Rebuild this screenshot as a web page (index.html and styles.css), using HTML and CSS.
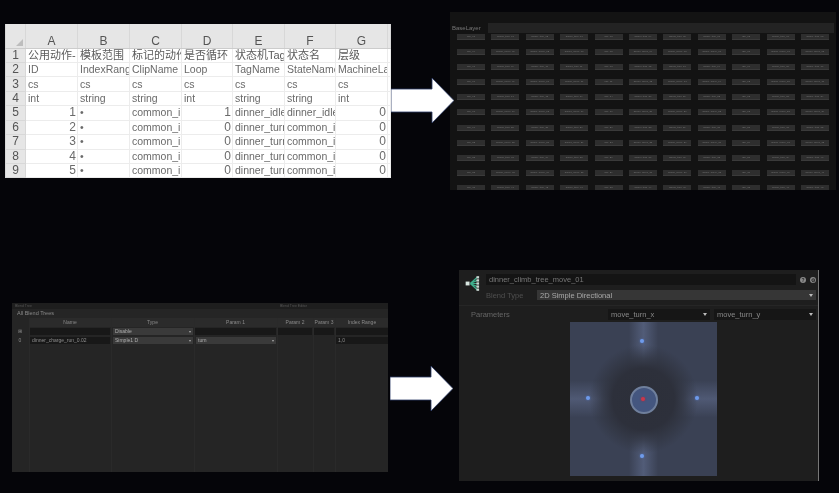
FILE: index.html
```html
<!DOCTYPE html>
<html>
  <head>
    <meta charset="utf-8" />
    <title>Blend tree config</title>
    <link rel="stylesheet" href="styles.css">
  </head>

  <body>
    <div class="row row-top">
      <!-- spreadsheet -->
      <table class="sheet">
        <colgroup>
          <col class="c-num"><col class="c-52"><col class="c-52"><col class="c-52"><col class="c-51"><col class="c-52"><col class="c-51"><col class="c-52"><col class="c-end">
        </colgroup>
        <tr class="letters">
          <th class="corner"><span class="corner-mark"></span></th><th>A</th><th>B</th><th>C</th><th>D</th><th>E</th><th>F</th><th>G</th><th></th>
        </tr>
        <tr class="cjk"><th>1</th><td>公用动作-</td><td>模板范围</td><td>标记的动作</td><td>是否循环</td><td>状态机Tag</td><td>状态名</td><td>层级</td><td></td></tr>
        <tr><th>2</th><td>ID</td><td>IndexRang</td><td>ClipName</td><td>Loop</td><td>TagName</td><td>StateName</td><td>MachineLa</td><td>A</td></tr>
        <tr><th>3</th><td>cs</td><td>cs</td><td>cs</td><td>cs</td><td>cs</td><td>cs</td><td>cs</td><td>c</td></tr>
        <tr><th>4</th><td>int</td><td>string</td><td>string</td><td>int</td><td>string</td><td>string</td><td>int</td><td>s</td></tr>
        <tr><th>5</th><td class="num">1</td><td>•</td><td>common_i</td><td class="num">1</td><td>dinner_idle</td><td>dinner_idle</td><td class="num">0</td><td>c</td></tr>
        <tr><th>6</th><td class="num">2</td><td>•</td><td>common_i</td><td class="num">0</td><td>dinner_turn</td><td>common_i</td><td class="num">0</td><td>c</td></tr>
        <tr><th>7</th><td class="num">3</td><td>•</td><td>common_i</td><td class="num">0</td><td>dinner_turn</td><td>common_i</td><td class="num">0</td><td>c</td></tr>
        <tr><th>8</th><td class="num">4</td><td>•</td><td>common_i</td><td class="num">0</td><td>dinner_turn</td><td>common_i</td><td class="num">0</td><td>c</td></tr>
        <tr><th>9</th><td class="num">5</td><td>•</td><td>common_i</td><td class="num">0</td><td>dinner_turn</td><td>common_i</td><td class="num">0</td><td>c</td></tr>
      </table>

      <svg class="arrow arrow-top" width="63" height="45" viewBox="0 0 63 45">
        <polygon points="0,11 41,11 41,0 63,22.5 41,45 41,34 0,34" />
      </svg>

      <!-- animator layer -->
      <div class="layer">
        <div class="layer-title"><span>BaseLayer</span></div>
        <div class="nodes">
          <div class="node">idle_01</div><div class="node">dinner_turn_01</div><div class="node">dinner_turn_02</div><div class="node">dinner_turn_03</div><div class="node">idle_02</div><div class="node">dinner_turn_04</div><div class="node">dinner_turn_05</div><div class="node">dinner_turn_06</div><div class="node">idle_03</div><div class="node">dinner_turn_07</div><div class="node">dinner_turn_08</div>
          <div class="node">idle_04</div><div class="node">dinner_move_01</div><div class="node">dinner_move_02</div><div class="node">dinner_move_03</div><div class="node">idle_05</div><div class="node">dinner_move_04</div><div class="node">dinner_move_05</div><div class="node">dinner_move_06</div><div class="node">idle_06</div><div class="node">dinner_move_07</div><div class="node">dinner_move_08</div>
          <div class="node">idle_07</div><div class="node">dinner_turn_09</div><div class="node">dinner_turn_10</div><div class="node">dinner_turn_11</div><div class="node">idle_08</div><div class="node">dinner_turn_12</div><div class="node">dinner_turn_13</div><div class="node">dinner_turn_14</div><div class="node">idle_09</div><div class="node">dinner_turn_15</div><div class="node">dinner_turn_16</div>
          <div class="node">idle_10</div><div class="node">dinner_move_09</div><div class="node">dinner_move_10</div><div class="node">dinner_move_11</div><div class="node">idle_11</div><div class="node">dinner_move_12</div><div class="node">dinner_move_13</div><div class="node">dinner_move_14</div><div class="node">idle_12</div><div class="node">dinner_move_15</div><div class="node">dinner_move_16</div>
          <div class="node">idle_13</div><div class="node">dinner_turn_17</div><div class="node">dinner_turn_18</div><div class="node">dinner_turn_19</div><div class="node">idle_14</div><div class="node">dinner_turn_20</div><div class="node">dinner_turn_21</div><div class="node">dinner_turn_22</div><div class="node">idle_15</div><div class="node">dinner_turn_23</div><div class="node">dinner_turn_24</div>
          <div class="node">idle_16</div><div class="node">dinner_move_17</div><div class="node">dinner_move_18</div><div class="node">dinner_move_19</div><div class="node">idle_17</div><div class="node">dinner_move_20</div><div class="node">dinner_move_21</div><div class="node">dinner_move_22</div><div class="node">idle_18</div><div class="node">dinner_move_23</div><div class="node">dinner_move_24</div>
          <div class="node">idle_19</div><div class="node">dinner_turn_25</div><div class="node">dinner_turn_26</div><div class="node">dinner_turn_27</div><div class="node">idle_20</div><div class="node">dinner_turn_28</div><div class="node">dinner_turn_29</div><div class="node">dinner_turn_30</div><div class="node">idle_21</div><div class="node">dinner_turn_31</div><div class="node">dinner_turn_32</div>
          <div class="node">idle_22</div><div class="node">dinner_move_25</div><div class="node">dinner_move_26</div><div class="node">dinner_move_27</div><div class="node">idle_23</div><div class="node">dinner_move_28</div><div class="node">dinner_move_29</div><div class="node">dinner_move_30</div><div class="node">idle_24</div><div class="node">dinner_move_31</div><div class="node">dinner_move_32</div>
          <div class="node">idle_25</div><div class="node">dinner_turn_33</div><div class="node">dinner_turn_34</div><div class="node">dinner_turn_35</div><div class="node">idle_26</div><div class="node">dinner_turn_36</div><div class="node">dinner_turn_37</div><div class="node">dinner_turn_38</div><div class="node">idle_27</div><div class="node">dinner_turn_39</div><div class="node">dinner_turn_40</div>
          <div class="node">idle_28</div><div class="node">dinner_move_33</div><div class="node">dinner_move_34</div><div class="node">dinner_move_35</div><div class="node">idle_29</div><div class="node">dinner_move_36</div><div class="node">dinner_move_37</div><div class="node">dinner_move_38</div><div class="node">idle_30</div><div class="node">dinner_move_39</div><div class="node">dinner_move_40</div>
          <div class="node">idle_31</div><div class="node">dinner_turn_41</div><div class="node">dinner_turn_42</div><div class="node">dinner_turn_43</div><div class="node">idle_32</div><div class="node">dinner_turn_44</div><div class="node">dinner_turn_45</div><div class="node">dinner_turn_46</div><div class="node">idle_33</div><div class="node">dinner_turn_47</div><div class="node">dinner_turn_48</div>
        </div>
      </div>
    </div>

    <div class="row row-bottom">
      <!-- blend tree list -->
      <div class="trees">
        <div class="trees-bar"><span>Blend Tree</span><span class="trees-tab">Blend Tree Editor</span></div>
        <div class="trees-title">All Blend Trees</div>
        <div class="trees-grid">
          <div class="tcell"></div>
          <div class="tcell thead">Name</div>
          <div class="tcell thead">Type</div>
          <div class="tcell thead">Param 1</div>
          <div class="tcell thead">Param 2</div>
          <div class="tcell thead">Param 3</div>
          <div class="tcell thead">Index Range</div>

          <div class="tcell tindex">⊞</div>
          <div class="tcell"><div class="tfield"></div></div>
          <div class="tcell"><div class="tselect">Disable</div></div>
          <div class="tcell"><div class="tfield"></div></div>
          <div class="tcell"><div class="tfield"></div></div>
          <div class="tcell"><div class="tfield"></div></div>
          <div class="tcell"><div class="tfield"></div></div>

          <div class="tcell tindex">0</div>
          <div class="tcell"><div class="tfield">dinner_charge_run_0.02</div></div>
          <div class="tcell"><div class="tselect">Simple1 D</div></div>
          <div class="tcell"><div class="tselect">turn</div></div>
          <div class="tcell"></div>
          <div class="tcell"></div>
          <div class="tcell"><div class="tfield">1,0</div></div>

          <div class="tcell"></div><div class="tcell"></div><div class="tcell"></div><div class="tcell"></div><div class="tcell"></div><div class="tcell"></div><div class="tcell"></div>
        </div>
      </div>

      <svg class="arrow arrow-bottom" width="63" height="45" viewBox="0 0 63 45">
        <polygon points="0,11 41,11 41,0 63,22.5 41,45 41,34 0,34" />
      </svg>

      <!-- blend tree inspector -->
      <div class="inspector">
        <div class="insp-head">
          <svg class="tree-icon" width="16" height="17" viewBox="0 0 19 22">
            <g stroke="#3fae8c" stroke-width="1.6" fill="none">
              <path d="M6 11 L15 3 M6 11 L15 7 M6 11 H15 M6 11 L15 15 M6 11 L15 19" />
            </g>
            <rect x="0" y="8.5" width="5" height="5" fill="#d8e6e0" />
            <rect x="14" y="1.5" width="3.4" height="3" fill="#c9d6d1" />
            <rect x="14" y="5.5" width="3.4" height="3" fill="#c9d6d1" />
            <rect x="14" y="9.5" width="3.4" height="3" fill="#c9d6d1" />
            <rect x="14" y="13.5" width="3.4" height="3" fill="#c9d6d1" />
            <rect x="14" y="17.5" width="3.4" height="3" fill="#c9d6d1" />
          </svg>
          <div class="insp-main">
            <div class="insp-name">
              <div class="name-field">dinner_climb_tree_move_01</div>
              <span class="round-btn">?</span>
              <span class="round-btn">⚙</span>
            </div>
            <div class="insp-type">
              <span class="type-label">Blend Type</span>
              <div class="type-select">2D Simple Directional</div>
            </div>
          </div>
        </div>

        <div class="insp-params">
          <span class="params-label">Parameters</span>
          <div class="param-select">move_turn_x</div>
          <div class="param-select">move_turn_y</div>
        </div>

        <div class="blend">
          <span class="dot dot-top"></span>
          <span class="dot dot-left"></span>
          <span class="dot dot-right"></span>
          <span class="dot dot-bottom"></span>
          <span class="ring"></span>
          <span class="dot-center"></span>
        </div>
      </div>
    </div>
  </body>
</html>
```

FILE: styles.css
```css
html,
body {
  margin: 0;
  height: 100%;
}

body {
  background: #050509;
  font-family: "Liberation Sans", Arial, sans-serif;
  overflow: hidden;
}

.row {
  display: flex;
  align-items: flex-start;
}

.row-top {
  height: 262px;
}

.row-bottom {
  height: 231px;
}

.arrow {
  position: relative;
  z-index: 2;
  flex: none;
}

.arrow polygon {
  fill: #fff;
  stroke: #2b3a66;
  stroke-width: 0.8;
}

.arrow-top {
  margin: 78px -4px 0 0;
}

.arrow-bottom {
  margin: 104px 6px 0 2px;
}

/* Spreadsheet */
.sheet {
  margin: 24px 0 0 5px;
  width: 386px;
  height: 154px;
  table-layout: fixed;
  border-collapse: collapse;
  background: #fff;
  color: #6a6a6a;
  font-size: 10.5px;
  filter: blur(0.6px);
  flex: none;
}

.c-num { width: 20px; }
.c-52 { width: 52px; }
.c-51 { width: 51px; }
.c-end { width: 3px; }

.sheet tr {
  height: 14.44px;
}

.sheet td,
.sheet th {
  padding: 0 1px 0 2px;
  border: 1px solid #ececec;
  overflow: hidden;
  white-space: nowrap;
  line-height: 13px;
  text-align: left;
  font-weight: normal;
}

.sheet th {
  padding: 0;
  background: #e6e6e6;
  border-color: #d8d8d8;
  text-align: center;
  font-size: 12px;
  color: #555;
}

.sheet .letters {
  height: 24px;
}

.sheet .letters th {
  vertical-align: bottom;
  border-top: 0;
  border-bottom-color: #ccc;
}

.corner-mark {
  display: block;
  width: 0;
  height: 0;
  margin: 0 2px 2px auto;
  border-style: solid;
  border-width: 0 0 7px 7px;
  border-color: transparent transparent #bdbdbd transparent;
}

.sheet .num {
  text-align: right;
  font-size: 12px;
}

.sheet .cjk td {
  font-family: "Liberation Sans", "Noto Sans CJK SC", sans-serif;
  font-size: 11px;
  color: #5a5a5a;
}

/* Animator layer */
.layer {
  margin-top: 12px;
  width: 386px;
  height: 178px;
  padding: 11px 2px 0 0;
  box-sizing: border-box;
  background: #131313;
  overflow: hidden;
  filter: blur(0.6px);
  flex: none;
}

.layer-title {
  height: 10px;
  margin-left: 2px;
  background: #232323;
  color: #777;
  font-size: 6px;
  line-height: 10px;
}

.layer-title span {
  display: inline-block;
  padding-right: 7px;
  background: #131313;
}

.nodes {
  display: grid;
  grid-template-columns: repeat(11, 28px);
  grid-auto-rows: 6px;
  column-gap: 6.4px;
  row-gap: 9.1px;
  padding: 1px 0 0 7px;
}

.node {
  background: #2e2e2e;
  border-bottom: 1px solid #3a3a3a;
  color: #777;
  font-size: 2.5px;
  line-height: 5px;
  text-align: center;
  overflow: hidden;
  white-space: nowrap;
}

/* Blend tree list */
.trees {
  margin: 41px 0 0 12px;
  width: 376px;
  height: 169px;
  display: flex;
  flex-direction: column;
  background: #252525;
  color: #8a8a8a;
  font-size: 5px;
  filter: blur(0.6px);
  flex: none;
}

.trees-bar {
  display: flex;
  height: 6px;
  padding-left: 3px;
  line-height: 6px;
  color: #555;
  font-size: 3.5px;
  background: #1e1e1e;
}

.trees-tab {
  margin-left: 248px;
}

.trees-title {
  height: 9px;
  padding-left: 5px;
  line-height: 9px;
  font-size: 5.5px;
}

.trees-grid {
  flex: 1;
  display: grid;
  grid-template-columns: 18px 82px 83px 83px 36px 22px 52px;
  grid-template-rows: 9px 9px 9px 1fr;
}

.tcell {
  border-right: 1px solid #2a2a2a;
  padding-right: 1px;
  min-width: 0;
}

.tcell:nth-child(7n) {
  border-right: 0;
  padding-right: 0;
}

.thead {
  text-align: center;
  line-height: 9px;
  background: #2b2b2b;
  font-size: 5px;
}

.tindex {
  text-align: center;
  line-height: 8px;
}

.tfield,
.tselect {
  height: 7px;
  margin-top: 1px;
  padding-left: 2px;
  line-height: 7px;
  background: #181818;
  color: #8f8f8f;
  white-space: nowrap;
  overflow: hidden;
}

.tselect {
  display: flex;
  justify-content: space-between;
  align-items: center;
  margin-left: 1px;
  background: #3a3a3a;
  color: #b0b0b0;
}

.tselect::after {
  content: "";
  margin-right: 2px;
  border-style: solid;
  border-width: 2px 1.5px 0 1.5px;
  border-color: #aaa transparent transparent transparent;
}

/* Blend tree inspector */
.inspector {
  margin-top: 8px;
  width: 360px;
  height: 211px;
  box-sizing: border-box;
  background: #1e1e1e;
  border-right: 1px solid #777;
  color: #777;
  font-size: 7.5px;
  filter: blur(0.5px);
  flex: none;
}

.insp-head {
  display: flex;
  height: 27px;
  padding: 4px 2px 4px 6px;
  border-bottom: 1px solid #262626;
}

.tree-icon {
  flex: none;
  margin: 1px 5px 0 0;
}

.insp-main {
  flex: 1;
}

.insp-name {
  display: flex;
  align-items: center;
  height: 11px;
}

.name-field {
  width: 307px;
  height: 11px;
  padding-left: 3px;
  line-height: 11px;
  background: #141414;
  color: #777;
  flex: none;
}

.round-btn {
  width: 6px;
  height: 6px;
  margin-left: 4px;
  border-radius: 50%;
  background: #8a8a8a;
  color: #222;
  font-size: 5px;
  font-weight: bold;
  line-height: 6px;
  text-align: center;
  overflow: hidden;
  flex: none;
}

.insp-type {
  display: flex;
  align-items: center;
  height: 10px;
  margin-top: 5px;
}

.type-label {
  width: 51px;
  color: #4f4f4f;
  flex: none;
}

.type-select,
.param-select {
  display: flex;
  justify-content: space-between;
  align-items: center;
  box-sizing: border-box;
  padding: 0 3px;
  color: #a8a8a8;
}

.type-select {
  width: 279px;
  height: 10px;
  background: #363636;
}

.type-select::after,
.param-select::after {
  content: "";
  border-style: solid;
  border-width: 3px 2.5px 0 2.5px;
  border-color: #bbb transparent transparent transparent;
}

.insp-params {
  display: flex;
  align-items: center;
  height: 11px;
  margin-top: 3px;
  padding-left: 12px;
  gap: 4px;
}

.params-label {
  width: 133px;
  flex: none;
  color: #666;
}

.param-select {
  width: 102px;
  height: 11px;
  background: #161616;
  color: #888;
  flex: none;
}

.blend {
  position: relative;
  width: 147px;
  height: 154px;
  margin: 2px 0 0 111px;
  filter: blur(0.4px);
  background:
    radial-gradient(circle closest-side at 50% 50%, #2c2f39 0, #2d303b 42%, rgba(48, 52, 64, 0.75) 55%, rgba(48, 52, 64, 0) 74%),
    linear-gradient(90deg, rgba(120, 136, 178, 0) 40%, rgba(120, 136, 178, 0.38) 50%, rgba(120, 136, 178, 0) 60%),
    linear-gradient(180deg, rgba(120, 136, 178, 0) 38%, rgba(120, 136, 178, 0.34) 50%, rgba(120, 136, 178, 0) 62%),
    #3a4154;
}

.dot,
.dot-center {
  position: absolute;
  width: 4px;
  height: 4px;
  border-radius: 50%;
  background: #6f9bea;
  box-shadow: 0 0 2px #4d74c4;
}

.dot-top { left: 70px; top: 17px; }
.dot-left { left: 16px; top: 74px; }
.dot-right { left: 125px; top: 74px; }
.dot-bottom { left: 70px; top: 132px; }

.dot-center {
  left: 71px;
  top: 75px;
  background: #c9384c;
  box-shadow: 0 0 2px #a52c40;
}

.ring {
  position: absolute;
  left: 60px;
  top: 64px;
  width: 24px;
  height: 24px;
  border: 2px solid #6f7f9c;
  border-radius: 50%;
  background: #44567f;
}
```
